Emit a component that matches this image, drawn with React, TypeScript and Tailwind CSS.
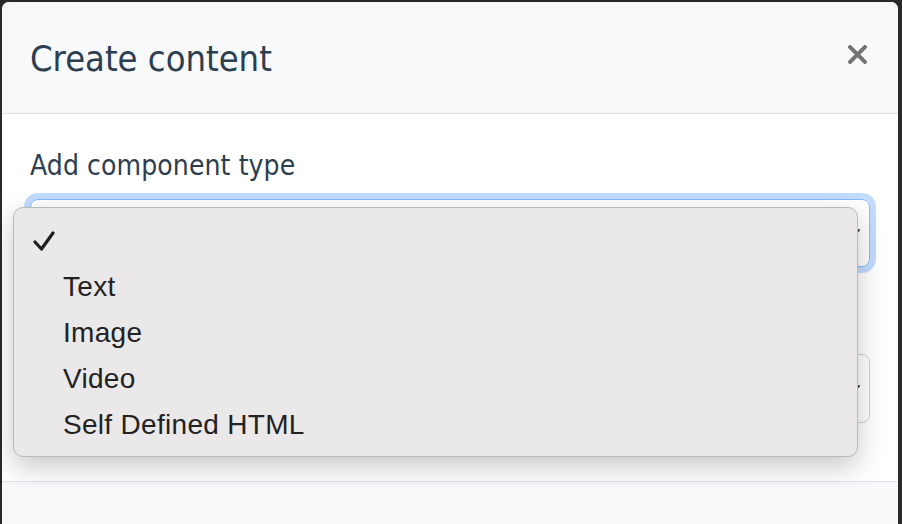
const opties = ["Text", "Image", "Video", "Self Defined HTML"];

function Chevron() {
  return (
    <svg width="16" height="16" viewBox="0 0 16 16" fill="none">
      <path
        d="M2 5l6 6 6-6"
        stroke="#343a40"
        strokeWidth="2"
        strokeLinecap="round"
        strokeLinejoin="round"
      />
    </svg>
  );
}

export default function App() {
  const titelFont = {
    fontFamily: '"DejaVu Sans Condensed", "DejaVu Sans", sans-serif',
  };

  return (
    <div className="relative w-[902px] h-[524px] overflow-hidden bg-[#2a2a2a] pt-[2px] pl-[2px] pr-[4px]">
      <div className="h-full bg-white rounded-t-[7px] flex flex-col overflow-hidden">
        <div className="h-[112px] shrink-0 bg-[#f8f9fa] border-b border-[#dee2e6] flex items-center justify-between pl-[28px] pr-[26px]">
          <h5
            className="text-[36px] leading-none text-[#2c3e50] font-normal mt-[2px]"
            style={titelFont}
          >
            Create content
          </h5>
          <button className="w-[30px] h-[30px] flex items-center justify-center mb-[6px]">
            <svg width="19" height="19" viewBox="0 0 18 18">
              <path
                d="M2 2l14 14M16 2L2 16"
                stroke="#737373"
                strokeWidth="3.8"
                strokeLinecap="square"
              />
            </svg>
          </button>
        </div>

        <div className="h-[367px] shrink-0 pl-[28px] pr-[28px] pt-[31px]">
          <label
            className="block text-[28px] leading-[42px] text-[#2c3e50] tracking-[0.1px]"
            style={titelFont}
          >
            Add component type
          </label>
          <div className="mt-[12px] h-[68px] border border-[#86b7fe] rounded-[8px] shadow-[0_0_0_6px_rgba(13,110,253,0.25)] flex items-center justify-end pr-[8px]">
            <Chevron />
          </div>
          <div className="mt-[87px] h-[69px] border border-[#ced4da] rounded-[8px] flex items-center justify-end pr-[8px]">
            <Chevron />
          </div>
        </div>

        <div className="flex-1 bg-[#f8f9fa] border-t border-[#dee2e6]" />
      </div>

      <div
        className="absolute left-[13px] top-[207px] w-[845px] h-[250px] bg-[#eae8e9] border border-[#b9b9b9] rounded-[10px] shadow-[0_10px_28px_rgba(0,0,0,0.22)] pt-[10px]"
        style={{ fontFamily: '"Liberation Sans", Arial, sans-serif' }}
      >
        <div className="h-[46px] flex items-center pl-[19px]">
          <svg width="22" height="20" viewBox="0 0 22 20" fill="none">
            <path
              d="M2 11l6.5 7L20 2"
              stroke="#1e1e1e"
              strokeWidth="3.2"
              strokeLinecap="round"
              strokeLinejoin="round"
            />
          </svg>
        </div>
        {opties.map((optie) => (
          <div
            key={optie}
            className="h-[46px] flex items-center pl-[49px] text-[28px] text-[#222222] tracking-[0.3px]"
          >
            {optie}
          </div>
        ))}
      </div>
    </div>
  );
}
